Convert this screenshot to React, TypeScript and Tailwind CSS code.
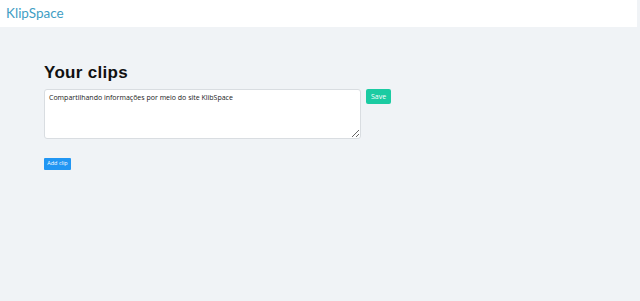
import { useState } from "react";

function App() {
  const [clips, setClips] = useState<string[]>([
    "Compartilhando informações por meio do site KlibSpace",
  ]);

  return (
    <div className="min-h-[301px] bg-[#f0f3f6] font-['Open_Sans',sans-serif]">
      <header className="h-[27px] bg-white pl-[6px] flex items-center mr-[3px]">
        <span className="font-['Lato',sans-serif] text-[13.5px] leading-none text-[#3f9ec4] pt-[1px]">
          KlipSpace
        </span>
      </header>

      <main className="pl-[44px] pt-[36px]">
        <h1 className="font-['Liberation_Sans',sans-serif] font-bold text-[17px] leading-[20px] text-[#111] tracking-[0.3px]">
          Your clips
        </h1>

        <div className="mt-[6px] flex flex-col gap-[6px]">
          {clips.map((clip, index) => (
            <div key={index} className="flex items-start gap-[5px]">
              <textarea
                className="w-[317px] h-[50px] bg-white border border-[#d9dde1] rounded-[3px] px-[4px] py-[3px] text-[7px] leading-[10px] text-[#222] resize-y outline-none"
                defaultValue={clip}
              />
              <button className="w-[25px] h-[15px] rounded-[2px] bg-[#1bcba2] text-white text-[7px] leading-none">
                Save
              </button>
            </div>
          ))}
        </div>

        <button
          className="mt-[19px] w-[27px] h-[12px] rounded-[1px] bg-[#2196f3] text-white text-[5.5px] leading-none"
          onClick={() => setClips([...clips, ""])}
        >
          Add clip
        </button>
      </main>
    </div>
  );
}

export default App;
